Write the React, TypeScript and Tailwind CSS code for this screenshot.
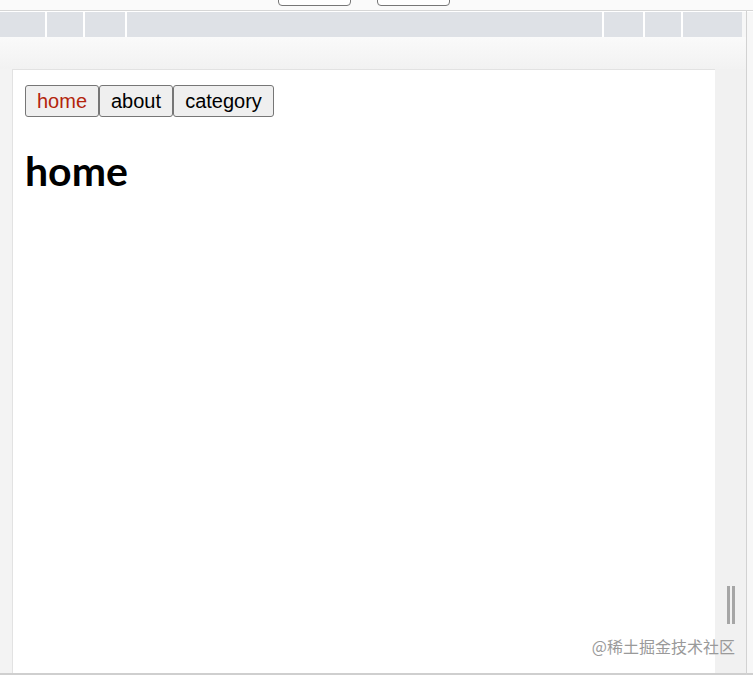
export default function App() {
  const segments = [45, 36, 40, 475, 39, 36, 59]

  return (
    <div className="relative w-[753px] h-[675px] overflow-hidden bg-[#f7f7f7] flex flex-col font-['Liberation_Sans',Arial,sans-serif]">
      {/* cut-off toolbar above */}
      <div className="relative h-[11px] shrink-0 bg-[#fafafa] border-b border-[#d6d6d6]">
        <div className="absolute left-[278px] top-[-4px] w-[73px] h-[10px] bg-white border border-[#777] rounded-b-[4px]" />
        <div className="absolute left-[377px] top-[-4px] w-[73px] h-[10px] bg-white border border-[#777] rounded-b-[4px]" />
      </div>

      <div className="h-[1px] shrink-0 bg-white" />

      {/* tab strip */}
      <div className="flex h-[25px] shrink-0 gap-[2px] w-[742px] bg-white">
        {segments.map((w, i) => (
          <div key={i} className="h-full bg-[#dee1e6]" style={{ width: w }} />
        ))}
      </div>

      <div className="h-[32px] shrink-0 w-[746px] bg-gradient-to-b from-[#fafafa] to-[#f2f2f2]" />

      {/* page frame */}
      <div className="flex flex-1 w-[746px]">
        <div className="w-[12px] shrink-0 bg-[#f3f3f3]" />
        <div className="w-[703px] shrink-0 bg-white border-t border-l border-[#e2e2e2] pt-[15px] pl-[12px]">
          <div className="flex">
            <button className="h-[32px] w-[74px] bg-[#efefef] border border-[#767676] rounded-[3px] text-[20px] text-[#b3240c]">
              home
            </button>
            <button className="h-[32px] w-[74px] bg-[#efefef] border border-[#767676] rounded-[3px] text-[20px] text-black">
              about
            </button>
            <button className="h-[32px] w-[101px] bg-[#efefef] border border-[#767676] rounded-[3px] text-[20px] text-black">
              category
            </button>
          </div>
          <h1 className="mt-[30px] text-[41px] leading-[48px] font-bold text-black font-['Lato','Noto_Sans',sans-serif]">
            home
          </h1>
        </div>
        <div className="relative flex-1 bg-[#f1f1f1]">
          <div className="absolute left-[12px] top-[517px] w-[3px] h-[38px] bg-[#a6a6a6]" />
          <div className="absolute left-[17px] top-[517px] w-[3px] h-[38px] bg-[#a6a6a6]" />
        </div>
      </div>

      <div className="h-[2px] shrink-0 bg-[#cfcfcf]" />

      {/* window edge */}
      <div className="absolute left-[746px] top-[11px] bottom-0 w-[1px] bg-[#d2d2d2]" />

      <div className="absolute right-[18px] top-[638px] text-[16px] leading-none text-[#9a9a9a] font-['Noto_Sans_CJK_SC',sans-serif]">
        @稀土掘金技术社区
      </div>
    </div>
  )
}
